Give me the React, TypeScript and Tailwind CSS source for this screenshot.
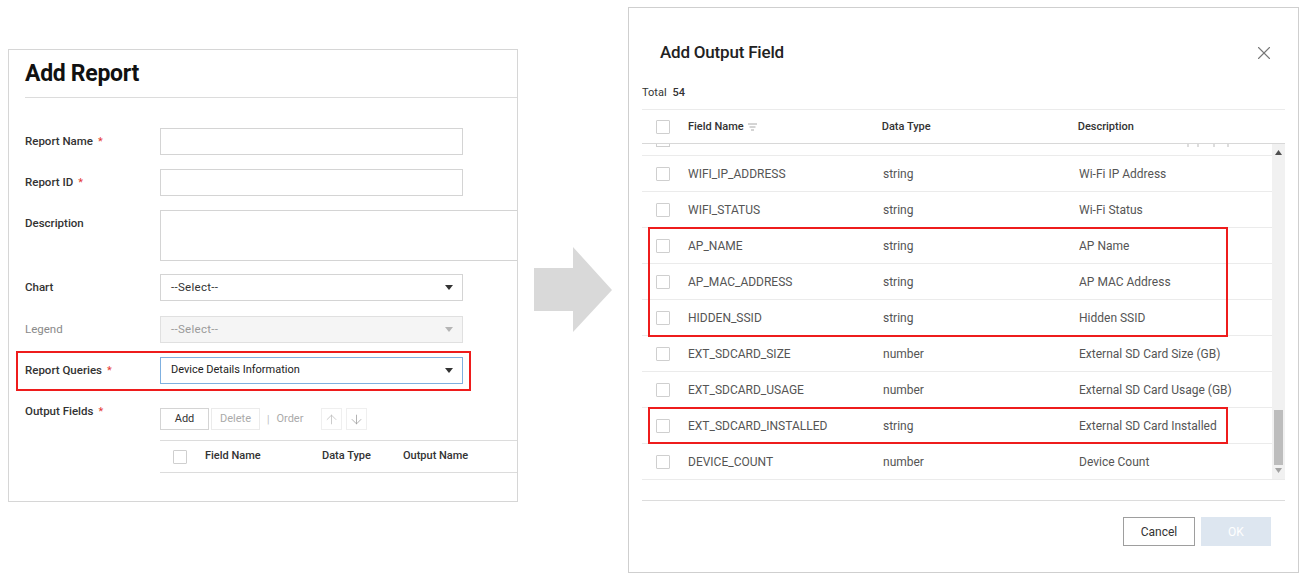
import { ArrowDown, ArrowUp, X } from "lucide-react"

const font = { fontFamily: "Roboto, 'Liberation Sans', sans-serif" }

function Caret({ muted }: { muted?: boolean }) {
  return (
    <svg width="8" height="5" viewBox="0 0 8 5" className={muted ? "text-[#b5b5b5]" : "text-[#333]"}>
      <path d="M0 0h8L4 5z" fill="currentColor" />
    </svg>
  )
}

function Label({ text, required, muted }: { text: string; required?: boolean; muted?: boolean }) {
  return (
    <div className="w-[135px] h-[27px] flex items-center shrink-0 pt-[1px]">
      <span className={muted ? "text-[11.5px] text-[#8a8a8a]" : "text-[11.5px] font-medium text-[#333]"}>{text}</span>
      {required && <span className="ml-[5px] text-[#e53935] text-[11px]">*</span>}
    </div>
  )
}

function Checkbox() {
  return <div className="w-[14px] h-[14px] border border-[#cfcfcf] bg-white rounded-[1px] shrink-0" />
}

const rows = [
  { name: "WIFI_IP_ADDRESS", type: "string", desc: "Wi-Fi IP Address" },
  { name: "WIFI_STATUS", type: "string", desc: "Wi-Fi Status" },
  { name: "AP_NAME", type: "string", desc: "AP Name" },
  { name: "AP_MAC_ADDRESS", type: "string", desc: "AP MAC Address" },
  { name: "HIDDEN_SSID", type: "string", desc: "Hidden SSID" },
  { name: "EXT_SDCARD_SIZE", type: "number", desc: "External SD Card Size (GB)" },
  { name: "EXT_SDCARD_USAGE", type: "number", desc: "External SD Card Usage (GB)" },
  { name: "EXT_SDCARD_INSTALLED", type: "string", desc: "External SD Card Installed" },
  { name: "DEVICE_COUNT", type: "number", desc: "Device Count" },
]

function AddReport() {
  return (
    <div className="ml-[8px] mt-[49px] w-[510px] h-[453px] border border-[#d6d6d6] bg-white pl-[16px] overflow-hidden">
      <h1 className="pt-[8px] text-[23px] leading-[32px] font-bold text-[#111] tracking-[-0.3px]">Add Report</h1>
      <div className="mt-[7px] h-px bg-[#dcdcdc]" />

      <div className="mt-[30px] flex flex-col">
        <div className="flex">
          <Label text="Report Name" required />
          <div className="w-[303px] h-[27px] border border-[#d4d4d4]" />
        </div>
        <div className="flex mt-[14px]">
          <Label text="Report ID" required />
          <div className="w-[303px] h-[27px] border border-[#d4d4d4]" />
        </div>
        <div className="flex mt-[14px]">
          <Label text="Description" />
          <div className="w-[380px] h-[51px] border border-[#d4d4d4] shrink-0" />
        </div>
        <div className="flex mt-[13px]">
          <Label text="Chart" />
          <div className="w-[303px] h-[27px] border border-[#d4d4d4] flex items-center justify-between pl-[10px] pr-[9px]">
            <span className="text-[11.5px] tracking-[0.3px] text-[#333]">--Select--</span>
            <Caret />
          </div>
        </div>
        <div className="flex mt-[15px]">
          <Label text="Legend" muted />
          <div className="w-[303px] h-[27px] border border-[#e0e0e0] bg-[#f5f5f5] flex items-center justify-between pl-[10px] pr-[9px]">
            <span className="text-[11.5px] tracking-[0.3px] text-[#9a9a9a]">--Select--</span>
            <Caret muted />
          </div>
        </div>
        <div className="flex mt-[14px] relative">
          <div className="absolute left-[-9px] top-[-6px] w-[455px] h-[40px] border-2 border-[#ee1c1c]" />
          <Label text="Report Queries" required />
          <div className="w-[303px] h-[27px] border border-[#7fb0e0] flex items-center justify-between pl-[10px] pr-[9px]">
            <span className="text-[11px] text-[#222]">Device Details Information</span>
            <Caret />
          </div>
        </div>
        <div className="flex mt-[14px]">
          <Label text="Output Fields" required />
          <div className="flex-1 pt-[10px]">
            <div className="flex items-center h-[22px]">
              <div className="w-[49px] h-[22px] border border-[#d4d4d4] flex items-center justify-center text-[11px] text-[#333]">Add</div>
              <div className="ml-[2px] w-[49px] h-[22px] border border-[#ebebeb] flex items-center justify-center text-[11px] text-[#aaa]">Delete</div>
              <span className="ml-[7px] text-[10px] text-[#bbb]">|</span>
              <span className="ml-[7px] text-[11px] text-[#aaa]">Order</span>
              <div className="ml-[18px] w-[21px] h-[22px] border border-[#efefef] flex items-center justify-center">
                <ArrowUp size={15} strokeWidth={1.2} className="text-[#bbb]" />
              </div>
              <div className="ml-[4px] w-[21px] h-[22px] border border-[#efefef] flex items-center justify-center">
                <ArrowDown size={15} strokeWidth={1.2} className="text-[#999]" />
              </div>
            </div>
            <div className="mt-[10px] h-[33px] border-t border-b border-[#dcdcdc] flex items-center">
              <div className="ml-[13px]"><Checkbox /></div>
              <span className="ml-[18px] w-[117px] text-[11px] font-medium text-[#333]">Field Name</span>
              <span className="w-[81px] text-[11px] font-medium text-[#333]">Data Type</span>
              <span className="text-[11px] font-medium text-[#333]">Output Name</span>
            </div>
          </div>
        </div>
      </div>
    </div>
  )
}

function Arrow() {
  return (
    <svg width="78" height="86" viewBox="0 0 78 86" className="ml-[16px] mt-[247px] shrink-0">
      <path d="M0 21H39V0L78 43L39 85V64H0Z" fill="#d9d9d9" />
    </svg>
  )
}

function Row({ name, type, desc }: { name: string; type: string; desc: string }) {
  return (
    <div className="h-[36px] flex items-center border-b border-[#ebebeb]">
      <div className="ml-[14px]"><Checkbox /></div>
      <span className="ml-[18px] w-[195px] text-[12px] text-[#555]">{name}</span>
      <span className="w-[196px] text-[12px] text-[#555]">{type}</span>
      <span className="text-[12px] text-[#555]">{desc}</span>
    </div>
  )
}

function AddOutputField() {
  return (
    <div className="ml-[16px] mt-[7px] w-[671px] h-[566px] border border-[#cfcfcf] bg-white px-[13px] flex flex-col">
      <div className="h-[72px] flex items-center justify-between pt-[18px]">
        <h2 className="ml-[18px] text-[17px] font-medium text-[#222] tracking-[-0.2px]">Add Output Field</h2>
        <X size={22} strokeWidth={1.2} className="mr-[10px] text-[#777]" />
      </div>
      <div className="h-[29px] flex items-center text-[11px] text-[#333] pb-[3px]">
        Total<span className="ml-[6px] font-medium">54</span>
      </div>
      <div className="h-[35px] flex items-center border-t border-[#ebebeb] border-b border-b-[#d8d8d8] pt-[1px]">
        <div className="ml-[14px]"><Checkbox /></div>
        <span className="ml-[18px] text-[11px] font-medium text-[#333]">Field Name</span>
        <svg width="9" height="8" viewBox="0 0 9 8" className="ml-[4px]">
          <path d="M0 1h9M1.5 4h6M3 7h3" stroke="#aaa" strokeWidth="1" />
        </svg>
        <span className="ml-[125px] w-[196px] text-[11px] font-medium text-[#333]">Data Type</span>
        <span className="text-[11px] font-medium text-[#333]">Description</span>
      </div>
      <div className="h-[336px] flex overflow-hidden border-b border-[#ebebeb]">
        <div className="flex-1 overflow-hidden">
          {/* row scrolled mostly out of view */}
          <div className="h-[12px] border-b border-[#ebebeb] flex items-start justify-between">
            <div className="ml-[14px] w-[14px] h-[3px] border-x border-b border-[#cfcfcf]" />
            <svg width="48" height="4" viewBox="0 0 48 4" className="mr-[40px]">
              <path d="M4 0v3M14 0v3M30 0v3M44 0v3" stroke="#bbb" strokeWidth="1" />
            </svg>
          </div>
          {rows.map((r) => (
            <Row key={r.name} {...r} />
          ))}
        </div>
        <div className="w-[13px] bg-[#f1f1f1] flex flex-col items-center relative">
          <svg width="7" height="5" viewBox="0 0 7 5" className="mt-[6px]">
            <path d="M0 5L3.5 0L7 5Z" fill="#505050" />
          </svg>
          <div className="absolute left-[2px] top-[266px] w-[9px] h-[55px] bg-[#bdbdbd]" />
          <svg width="7" height="5" viewBox="0 0 7 5" className="absolute bottom-[6px]">
            <path d="M0 0L3.5 5L7 0Z" fill="#a3a3a3" />
          </svg>
        </div>
      </div>
      <div className="mt-[20px] h-px bg-[#dcdcdc]" />
      <div className="mt-[16px] flex justify-end pr-[14px] gap-[6px]">
        <div className="w-[72px] h-[29px] border border-[#9e9e9e] bg-white flex items-center justify-center text-[12px] text-[#333]">Cancel</div>
        <div className="w-[70px] h-[29px] bg-[#dde6f0] flex items-center justify-center text-[12px] text-white">OK</div>
      </div>
    </div>
  )
}

export default function App() {
  return (
    <div style={font} className="w-[1308px] h-[579px] bg-white flex items-start overflow-hidden relative">
      <AddReport />
      <Arrow />
      <AddOutputField />
      {/* highlight boxes on the modal */}
      <div className="absolute left-[648px] top-[227px] w-[580px] h-[110px] border-2 border-[#ee1c1c]" />
      <div className="absolute left-[648px] top-[407px] w-[580px] h-[37px] border-2 border-[#ee1c1c]" />
    </div>
  )
}
